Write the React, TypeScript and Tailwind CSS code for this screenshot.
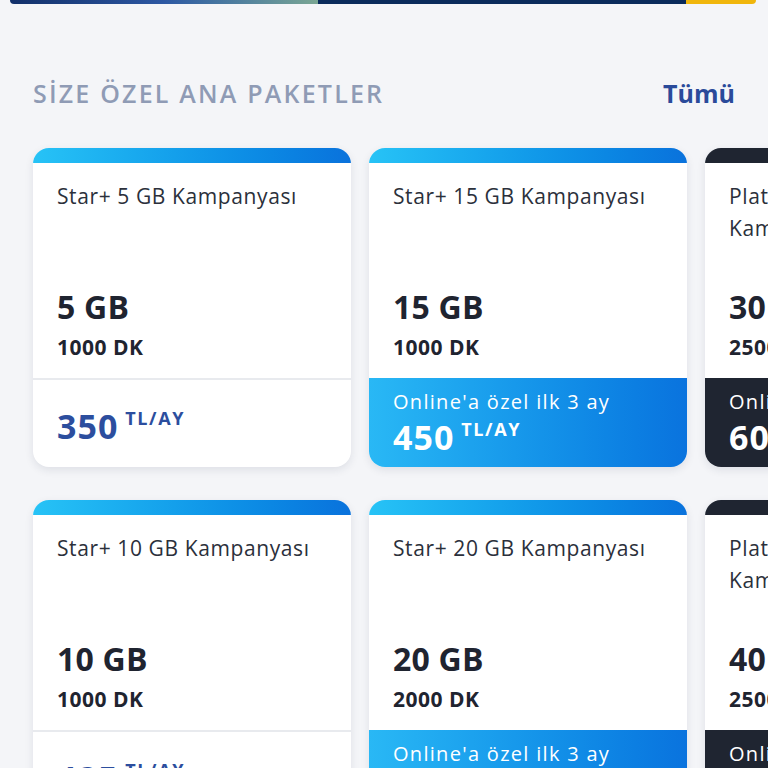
import React from "react";

type Card = {
  title: string;
  gb: string;
  dk: string;
  price: string;
  variant: "plain" | "blue" | "dark";
};

const row1: Card[] = [
  { title: "Star+ 5 GB Kampanyası", gb: "5 GB", dk: "1000 DK", price: "350", variant: "plain" },
  { title: "Star+ 15 GB Kampanyası", gb: "15 GB", dk: "1000 DK", price: "450", variant: "blue" },
  { title: "Platinum 30 GB Kampanyası", gb: "30 GB", dk: "2500 DK", price: "600", variant: "dark" },
];
const row2: Card[] = [
  { title: "Star+ 10 GB Kampanyası", gb: "10 GB", dk: "1000 DK", price: "425", variant: "plain" },
  { title: "Star+ 20 GB Kampanyası", gb: "20 GB", dk: "2000 DK", price: "550", variant: "blue" },
  { title: "Platinum 40 GB Kampanyası", gb: "40 GB", dk: "2500 DK", price: "700", variant: "dark" },
];

function PackageCard({ c }: { c: Card }) {
  const strip =
    c.variant === "dark"
      ? "bg-[#1f2531]"
      : "bg-gradient-to-r from-[#27c3f6] to-[#0a72dc]";
  return (
    <div className="w-[318px] shrink-0 rounded-[16px] bg-white shadow-[0_3px_8px_rgba(30,40,70,0.10)] overflow-hidden">
      <div className={`h-[15px] ${strip}`} />
      <div className="h-[215px] flex flex-col px-6 pt-[17px] pb-[17px]">
        <div className="h-[64px] text-[21px] leading-[32px] tracking-[0.6px] text-[#2b303b] pr-2">{c.title}</div>
        <div className="mt-auto">
          <div className="text-[32px] leading-[36px] font-bold text-[#1f2430] tracking-[0.2px]">{c.gb}</div>
          <div className="mt-[8px] text-[21px] leading-[28px] font-bold tracking-[0.5px] text-[#1f2430]">{c.dk}</div>
        </div>
      </div>
      {c.variant === "plain" ? (
        <>
          <div className="h-[2px] bg-[#e8eaee]" />
          <div className="h-[87px] px-6 flex items-center pt-[4px]">
            <Price price={c.price} color="text-[#2c4e9e]" />
          </div>
        </>
      ) : (
        <div
          className={`h-[89px] px-6 pt-[10px] text-white ${
            c.variant === "dark" ? "bg-[#1f2531]" : "bg-gradient-to-r from-[#29b8f5] to-[#0a73de]"
          }`}
        >
          <div className="text-[20px] leading-[28px] tracking-[1.3px]">Online'a özel ilk 3 ay</div>
          <div className="mt-[2px]">
            <Price price={c.price} color="text-white" />
          </div>
        </div>
      )}
    </div>
  );
}

function Price({ price, color }: { price: string; color: string }) {
  return (
    <div className={`flex items-start ${color}`}>
      <span className="text-[34px] leading-[38px] font-bold tracking-[1px]">{price}</span>
      <span className="ml-[7px] mt-[1px] text-[18px] leading-[20px] font-bold tracking-[1.6px]">TL/AY</span>
    </div>
  );
}

export default function App() {
  return (
    <div
      className="w-[768px] h-[768px] overflow-hidden bg-[#f4f5f8]"
      style={{ fontFamily: '"Open Sans", "Noto Sans", sans-serif' }}
    >
      <div className="ml-[10px] w-[746px] h-[4px] rounded-b-[6px] overflow-hidden flex">
        <div className="w-[308px] bg-gradient-to-r from-[#12306a] via-[#2d58a3] to-[#7aa693]" />
        <div className="w-[368px] bg-[#0a2b5c]" />
        <div className="flex-1 bg-[#f0b60c]" />
      </div>
      <div className="flex items-center justify-between pl-[33px] pr-[33px] mt-[73px] h-[34px]">
        <div className="text-[25px] font-semibold tracking-[2.2px] text-[#8f9bb5]">SİZE ÖZEL ANA PAKETLER</div>
        <div className="text-[25px] font-bold text-[#2a4a9a]">Tümü</div>
      </div>
      <div className="mt-[37px] pl-[33px] flex flex-col gap-[33px]">
        <div className="flex gap-[18px]">
          {row1.map((c) => (
            <PackageCard key={c.title} c={c} />
          ))}
        </div>
        <div className="flex gap-[18px]">
          {row2.map((c) => (
            <PackageCard key={c.title} c={c} />
          ))}
        </div>
      </div>
    </div>
  );
}
